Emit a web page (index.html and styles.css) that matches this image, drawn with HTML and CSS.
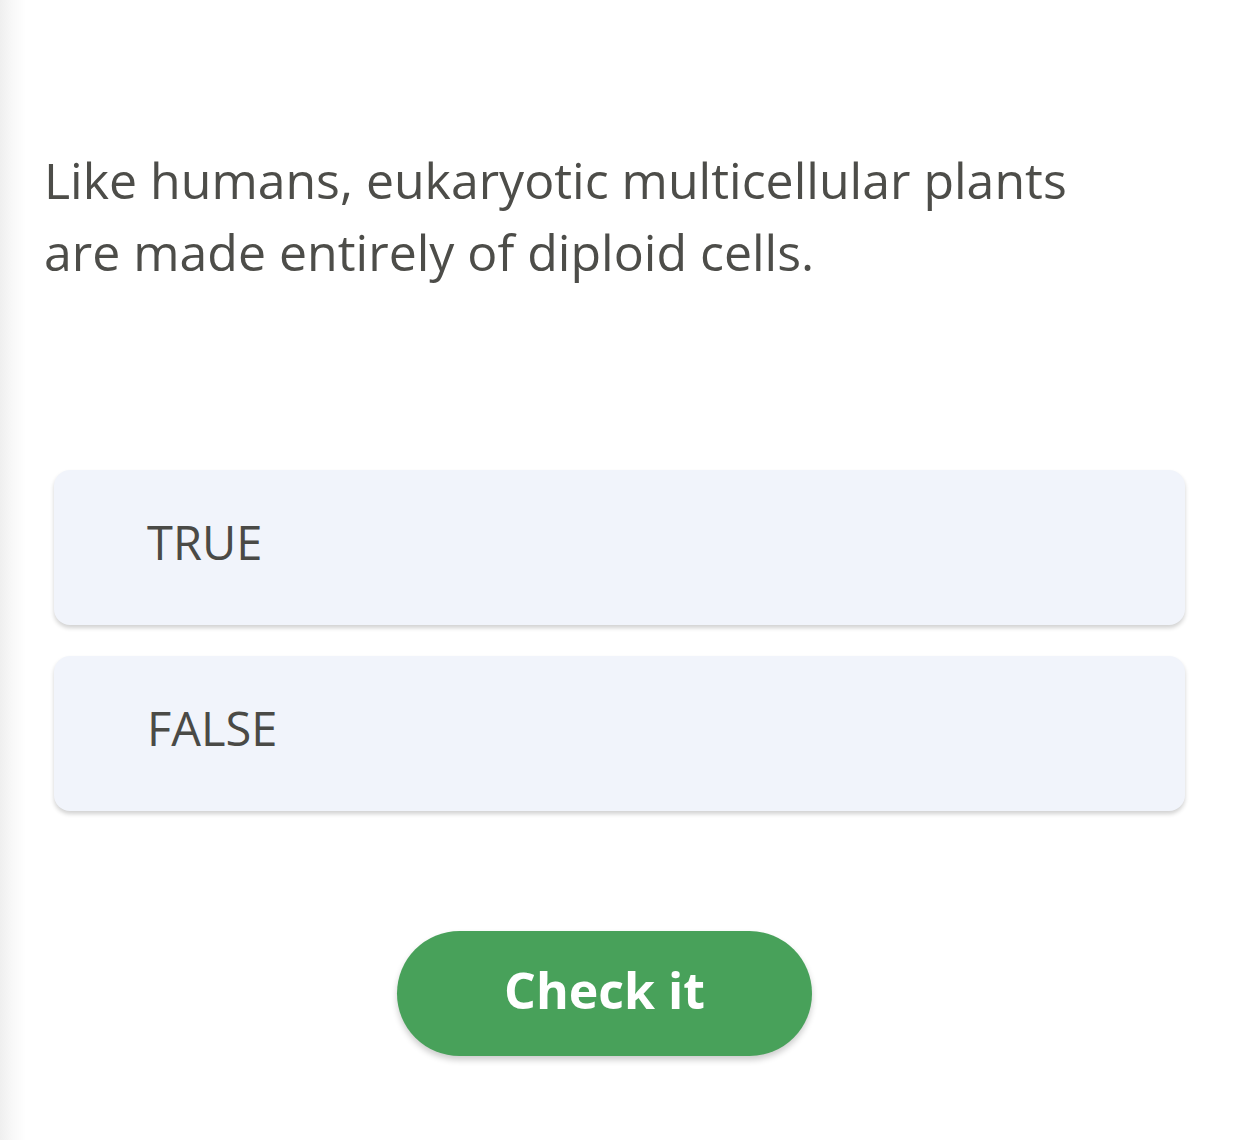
FILE: index.html
```html
<!DOCTYPE html>
<html>
<head>
<meta charset="utf-8">
<link rel="stylesheet" href="styles.css">
</head>
<body>
<div class="page">
  <p class="question">Like humans, eukaryotic multicellular plants are made entirely of diploid cells.</p>
  <div class="options">
    <div class="option">TRUE</div>
    <div class="option">FALSE</div>
  </div>
  <div class="actions">
    <button class="check">Check it</button>
  </div>
</div>
</body>
</html>
```
FILE: styles.css
```css
html, body {
  margin: 0;
  padding: 0;
  height: 100%;
}
body {
  background: linear-gradient(to right, #efefef 0px, #f8f8f8 12px, #ffffff 26px);
  font-family: "Open Sans", "Lato", sans-serif;
  font-variant-ligatures: none;
  color: #4a4a46;
}
.page {
  padding: 144px 54px 0 44px;
}
.question {
  margin: 0;
  font-size: 50px;
  line-height: 72px;
  width: 1080px;
  color: #4d4d49;
}
.options {
  display: flex;
  flex-direction: column;
  gap: 31px;
  margin-top: 182px;
  margin-left: 10px;
  width: 1131px;
}
.option {
  height: 155px;
  box-sizing: border-box;
  background: #f1f4fb;
  border-radius: 16px;
  box-shadow: 0 3px 4px rgba(0, 0, 0, 0.18);
  display: flex;
  align-items: center;
  padding-left: 93px;
  padding-bottom: 12px;
  font-size: 47px;
  color: #4a4a46;
}
.actions {
  display: flex;
  justify-content: center;
  margin-top: 120px;
  width: 1121px;
}
.check {
  width: 415px;
  height: 125px;
  border: none;
  border-radius: 63px;
  background: #48a15a;
  color: #ffffff;
  font-family: "Open Sans", "Lato", sans-serif;
  font-weight: 700;
  font-size: 50px;
  padding: 0 0 8px 0;
  box-shadow: 0 4px 6px rgba(0, 0, 0, 0.2);
}
```
